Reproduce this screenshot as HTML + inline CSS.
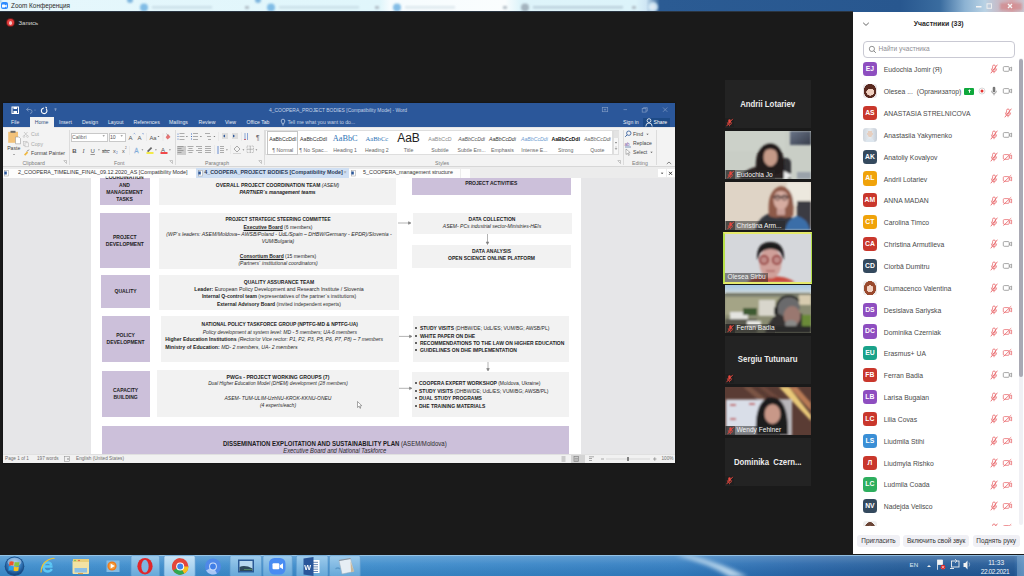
<!DOCTYPE html>
<html><head><meta charset="utf-8">
<style>
*{margin:0;padding:0;box-sizing:border-box}
html,body{width:1024px;height:576px;overflow:hidden;background:#1a1a1a;font-family:"Liberation Sans",sans-serif;position:relative}
.a{position:absolute}
.t{position:absolute;white-space:nowrap;line-height:1}
.tab{top:122.5px;transform:translateY(-50%);font-size:5.15px;color:#e9eef6}
.rb{font-size:5.15px;color:#444}
.rl{font-size:5.2px;color:#7a7a7a}
.sep{width:0.6px;background:#dcdcdc}
.sty{top:136.5px;transform:translateX(-50%)}
.stl{top:147.8px;transform:translateX(-50%);font-size:5.2px;color:#666}
.otb{top:173px;transform:translateY(-50%);font-size:5.4px;color:#333}
.pur{background:#ccc0da}
.gry{background:#f2f2f2}
.dl{transform:translate(-50%,-50%) scaleY(1.15);font-size:5px;font-weight:bold;color:#1c1c1c}
.dlL{transform:translateY(-50%) scaleY(1.15);font-size:5px;font-weight:bold;color:#1c1c1c}
.n{font-weight:normal;color:#2a2a2a}
.bu{position:absolute;width:2px;height:2px;border-radius:50%;background:#333}
.stb{top:458.8px;transform:translateY(-50%);font-size:4.7px;color:#6e6e6e}
.tile{position:absolute;left:725px;width:86px;height:48px;background:#232323;overflow:hidden}
.av{width:14.2px;height:14.2px;border-radius:3.3px;color:#fff;font-size:6.8px;font-weight:bold;text-align:center;line-height:14.6px}
.pn{transform:translateY(-50%);font-size:6.8px;color:#4a4a4a}
.pb{top:541px;transform:translate(-50%,-50%);font-size:6.43px;color:#333}
.tn{transform:translate(-50%,-50%) scaleY(1.08);font-size:7.8px;font-weight:bold;color:#ececec}
.vn{transform:translateY(-50%) scaleY(1.1);font-size:6.6px;color:#f4f4f4}
</style></head><body>
<!-- TITLE BAR -->
<div class="a" style="left:0;top:0;width:1024px;height:11.5px;background:linear-gradient(90deg,#e6f7fc 0px,#e0f6fb 380px,#f6fcfe 390px,#fafdfe 505px,#def4fa 520px,#dcf3fa 636px,#cfe6f4 646px,#2b5b93 660px,#28578f 900px,#3a6c9f 940px,#8db3d3 965px,#b9d2e4 985px,#c9b9c4 1000px,#d4a7ad 1012px,#c9c8d3 1024px)"></div>
<svg class="a" style="left:0;top:0" width="1024" height="12" viewBox="0 0 1024 12">
 <defs><filter id="tb"><feGaussianBlur stdDeviation="1"/></filter></defs>
 <g filter="url(#tb)" opacity="0.85">
 <rect x="-1" y="0" width="2" height="2" fill="#3b8fd0"/>
 <circle cx="144" cy="7.5" r="4" fill="#6fb2e2"/><rect x="152" y="6" width="60" height="2.5" fill="#c6dae4"/><rect x="245" y="6" width="4" height="3" fill="#aab6c0"/>
 <circle cx="271" cy="7.5" r="4" fill="#6fb2e2"/><rect x="279" y="6" width="80" height="2.5" fill="#c6dae4"/><rect x="375" y="6" width="4" height="3" fill="#aab6c0"/>
 <circle cx="130" cy="0" r="3" fill="#6aa8d8"/><circle cx="258" cy="0" r="3" fill="#6aa8d8"/>
 <circle cx="397" cy="7.5" r="4" fill="#6fb2e2"/><rect x="405" y="6" width="50" height="2.5" fill="#d8e4ea"/><rect x="503" y="6" width="4" height="3" fill="#aab6c0"/>
 <circle cx="525" cy="7.5" r="4" fill="#9aa8b4"/><rect x="533" y="6" width="90" height="2.5" fill="#b6cad6"/><rect x="632" y="6" width="4" height="3" fill="#aab6c0"/>
 <circle cx="653" cy="7" r="5" fill="#d6ecf8"/><circle cx="653" cy="7" r="2.5" fill="#f2f8fc"/>
 <rect x="1000" y="3" width="22" height="7" fill="#d56f6f" opacity="0.55"/>
 </g>
 <rect x="976" y="6" width="5.5" height="1.5" fill="#f4f4f4"/>
 <rect x="987" y="3.8" width="4.5" height="4.5" fill="none" stroke="#eee" stroke-width="1"/>
 <path d="M1008 4 l4 4 M1012 4 l-4 4" stroke="#f6f6f6" stroke-width="1.4"/>
</svg>
<div class="a" style="left:0.5px;top:2.2px;width:7px;height:7px;border-radius:2px;background:#2d8cff"></div>
<svg class="a" style="left:1.5px;top:3.7px" width="5" height="4" viewBox="0 0 5 4"><rect x="0" y="0.6" width="3" height="2.8" rx="0.5" fill="#fff"/><path d="M3 1.6 L4.8 0.6 V3.4 L3 2.4z" fill="#fff"/></svg>
<div class="t" style="left:11px;top:5.8px;transform:translateY(-50%);font-size:6.4px;color:#2a2a2a">Zoom Конференция</div>
<div class="a" style="left:0;top:11px;width:853px;height:0.8px;background:#2a3440"></div>
<!-- recording -->
<div class="a" style="left:5.8px;top:18px;width:9.4px;height:9.4px;border-radius:50%;background:#6a1a1a"></div>
<div class="a" style="left:6.7px;top:18.9px;width:7.6px;height:7.6px;border-radius:50%;background:#e23c3c"></div>
<div class="a" style="left:8.6px;top:20.6px;width:3.8px;height:4.2px;border-radius:50%;background:#f4c4c4"></div>
<div class="t" style="left:18.5px;top:22.9px;transform:translateY(-50%);font-size:6px;color:#d4d4d4">Запись</div>
<!-- WORD WINDOW -->
<div class="a" style="left:3px;top:103px;width:672px;height:360px;background:#e6e6e8"></div>
<div class="a" style="left:3px;top:103px;width:672px;height:24px;background:#2b579a"></div>
<!-- qat icons -->
<svg class="a" style="left:11px;top:106px" width="60" height="9" viewBox="0 0 60 9">
 <rect x="1" y="1" width="6.5" height="6.5" fill="none" stroke="#fff" stroke-width="1"/>
 <rect x="2.5" y="1" width="3.5" height="2" fill="#fff"/><rect x="2.5" y="5" width="3.5" height="2.5" fill="#fff"/>
 <path d="M15.5 3.5 L17.5 1.8 M15.5 3.5 L17.5 5.2 M15.5 3.5 H19 Q21 3.5 21 5.5 Q21 7.5 19 7.5" fill="none" stroke="#7f9bc4" stroke-width="0.9"/>
 <circle cx="24" cy="4" r="0.6" fill="#7f9bc4"/>
 <path d="M33 2 A2.8 2.8 0 1 0 35.3 3" fill="none" stroke="#fff" stroke-width="1.1"/><path d="M34 0.8 L36 1 L35.5 3.2Z" fill="#fff"/>
 <path d="M43.5 3.5 h2 l-1 1.2z" fill="#c9d6ea"/><rect x="43.5" y="2.5" width="2" height="0.4" fill="#c9d6ea"/>
</svg>
<div class="t" style="left:269px;top:110.8px;transform:translateY(-50%);font-size:4.94px;color:#c5d3e8">4_COOPERA_PROJECT BODIES [Compatibility Mode] - Word</div>
<!-- window controls -->
<svg class="a" style="left:600px;top:105px" width="75" height="10" viewBox="0 0 75 10">
 <g stroke="#7f9ac4" stroke-width="0.7" fill="none">
 <rect x="2.3" y="2.5" width="5.4" height="4.2"/><path d="M3.8 4.6 h2.4 M5 3.6 v2"/>
 <path d="M23.5 4.6 h3.5"/>
 <rect x="42.2" y="3.6" width="3.8" height="3.5"/><path d="M43.5 3.6 v-1 h3.8 v3.5 h-1.3"/>
 <path d="M63 2.5 l4.3 4.3 M67.3 2.5 l-4.3 4.3"/>
 </g>
</svg>
<!-- tabs -->
<div class="a" style="left:30px;top:117px;width:24px;height:11px;background:#f3f3f3"></div>
<div class="t tab" style="left:11px">File</div>
<div class="t tab" style="left:34.7px;color:#2f4d7e">Home</div>
<div class="t tab" style="left:59px">Insert</div>
<div class="t tab" style="left:82px">Design</div>
<div class="t tab" style="left:108px">Layout</div>
<div class="t tab" style="left:133.5px">References</div>
<div class="t tab" style="left:169px">Mailings</div>
<div class="t tab" style="left:198.5px">Review</div>
<div class="t tab" style="left:225px">View</div>
<div class="t tab" style="left:246.5px">Office Tab</div>
<svg class="a" style="left:280px;top:118px" width="6" height="8" viewBox="0 0 6 8"><path d="M1.2 3 A1.8 1.8 0 1 1 4.8 3 Q4.8 4.2 3.8 5 V6 H2.2 V5 Q1.2 4.2 1.2 3Z M2.3 7 H3.7" fill="none" stroke="#d6e0ef" stroke-width="0.7"/></svg>
<div class="t tab" style="left:287.5px;color:#c7d4e8">Tell me what you want to do...</div>
<div class="t tab" style="left:623px">Sign in</div>
<div class="a" style="left:643px;top:117.5px;width:27px;height:9.5px;background:#1d4a86"></div>
<svg class="a" style="left:645px;top:118px" width="8" height="9" viewBox="0 0 8 9"><circle cx="4" cy="2.6" r="1.9" fill="none" stroke="#fff" stroke-width="0.8"/><path d="M0.8 8.5 Q0.8 5 4 5 Q7.2 5 7.2 8.5" fill="none" stroke="#fff" stroke-width="0.8"/></svg>
<div class="t tab" style="left:653.5px;color:#fff">Share</div>
<!-- ribbon -->
<div class="a" style="left:3px;top:127.5px;width:672px;height:39px;background:#f3f3f3;border-bottom:1px solid #d7d7d7"></div>
<!-- clipboard group -->
<svg class="a" style="left:7px;top:130px" width="62" height="30" viewBox="0 0 62 30">
 <rect x="1.2" y="1.8" width="9.8" height="11" fill="#f2c27a"/>
 <rect x="3.5" y="0.8" width="5" height="2" fill="#6b6b6b"/>
 <path d="M8.5 7 h3.5 l1.5 1.5 v5.3 h-5z" fill="#fff" stroke="#8a8a8a" stroke-width="0.5"/>
 <path d="M6 24 l1 1 l1 -1z" fill="#666"/>
 <path d="M17 2 l3.5 4 M20.5 2 l-3.5 4" stroke="#b5b5b5" stroke-width="0.6"/><circle cx="17" cy="6.5" r="0.9" fill="none" stroke="#b5b5b5" stroke-width="0.5"/><circle cx="20.5" cy="6.5" r="0.9" fill="none" stroke="#b5b5b5" stroke-width="0.5"/>
 <rect x="16.5" y="11.5" width="3.5" height="4" fill="none" stroke="#bdbdbd" stroke-width="0.6"/><rect x="18" y="12.8" width="3.5" height="4" fill="#f3f3f3" stroke="#bdbdbd" stroke-width="0.6"/>
 <path d="M17 24.5 l3 -3 l1.2 1.2 l-3 3z" fill="#f0b73c"/><path d="M20 21.5 l1.8 -1.8" stroke="#555" stroke-width="0.8"/>
</svg>
<div class="t rb" style="left:7.2px;top:146.1px">Paste</div>
<div class="t rb" style="left:31px;top:131.8px;color:#a8a8a8">Cut</div>
<div class="t rb" style="left:31px;top:141.8px;color:#a8a8a8">Copy</div>
<div class="t rb" style="left:31px;top:151.3px">Format Painter</div>
<div class="t rl" style="left:22.6px;top:161.2px">Clipboard</div>
<svg class="a" style="left:63px;top:160px" width="5" height="5" viewBox="0 0 5 5"><path d="M0.5 0.5 h3 v3 M1 1 l2.5 2.5" fill="none" stroke="#999" stroke-width="0.5"/></svg>
<div class="a sep" style="left:69px;top:130px;height:35px"></div>
<!-- font group -->
<div class="a" style="left:70.8px;top:132.7px;width:36.8px;height:9.2px;background:#fff;border:0.5px solid #c9c9c9"></div>
<div class="a" style="left:109px;top:132.7px;width:17px;height:9.2px;background:#fff;border:0.5px solid #c9c9c9"></div>
<div class="t rb" style="left:72px;top:135.2px;color:#666">Calibri</div>
<div class="t rb" style="left:110px;top:135.2px;color:#555">10</div>
<svg class="a" style="left:70px;top:130px" width="106" height="26" viewBox="0 0 106 26">
 <path d="M32.5 5.5 l1.2 1 l1.2 -1z M50.5 5.5 l1.2 1 l1.2 -1z" fill="#555"/>
  <text x="58.5" y="9.8" font-size="6" fill="#555" font-family="Liberation Sans">A</text><path d="M63.5 4.2 l0.9 -0.9 l0.9 0.9" fill="none" stroke="#4472c4" stroke-width="0.5"/>
 <text x="67.5" y="9.8" font-size="6" fill="#555" font-family="Liberation Sans">A</text><path d="M72.2 3.3 l0.9 0.9 l0.9 -0.9" fill="none" stroke="#4472c4" stroke-width="0.5"/>
 <rect x="76.4" y="3" width="0.4" height="8" fill="#d8d8d8"/>
 <text x="79.5" y="9.5" font-size="5.8" fill="#555" font-family="Liberation Sans">Aa</text><path d="M87.5 6 l1 1 l1 -1z" fill="#555"/>
 <rect x="92.8" y="3" width="0.4" height="8" fill="#d8d8d8"/>
 <path d="M98 4 l2.5 3 l-3 2.5 l-1.8 -2.2z" fill="#e57373"/><path d="M96.5 3.5 l1.5 2" stroke="#777" stroke-width="0.5"/>
<text x="2.2" y="23" font-size="6" font-weight="bold" fill="#555" font-family="Liberation Sans">B</text>
 <text x="12.5" y="23" font-size="6" font-style="italic" fill="#555" font-family="Liberation Serif">I</text>
 <text x="20.5" y="23" font-size="6" fill="#555" font-family="Liberation Sans" text-decoration="underline">U</text><path d="M28 19.5 l0.9 0.9 l0.9 -0.9z" fill="#555"/>
 <text x="32" y="22.5" font-size="4.5" fill="#555" font-family="Liberation Sans">abc</text><path d="M32 20.5 h8" stroke="#555" stroke-width="0.5"/>
 <text x="43" y="22.5" font-size="5.5" fill="#555" font-family="Liberation Sans">x</text><text x="46" y="24" font-size="3" fill="#4472c4" font-family="Liberation Sans">2</text>
 <text x="52" y="22.5" font-size="5.5" fill="#555" font-family="Liberation Sans">x</text><text x="55" y="19" font-size="3" fill="#555" font-family="Liberation Sans">2</text>
 <rect x="59.5" y="16" width="0.4" height="9" fill="#d8d8d8"/>
 <text x="64.3" y="23" font-size="6.5" fill="#b9d5ee" stroke="#7aa6d6" stroke-width="0.3" font-family="Liberation Sans">A</text><path d="M71.5 19.5 l0.9 0.9 l0.9 -0.9z" fill="#555"/>
 <path d="M77 21 l4 -4 l1.2 1.2 l-4 4z" fill="#666"/><rect x="76.5" y="22.3" width="7" height="1.4" fill="#f3e600"/><path d="M85 19.5 l0.9 0.9 l0.9 -0.9z" fill="#555"/>
 <text x="91" y="22" font-size="6" fill="#555" font-family="Liberation Sans">A</text><rect x="90.5" y="22.3" width="7" height="1.4" fill="#e00"/><path d="M99 19.5 l0.9 0.9 l0.9 -0.9z" fill="#555"/>
</svg>
<div class="t rl" style="left:114px;top:161.2px">Font</div>
<svg class="a" style="left:169px;top:160px" width="5" height="5" viewBox="0 0 5 5"><path d="M0.5 0.5 h3 v3 M1 1 l2.5 2.5" fill="none" stroke="#999" stroke-width="0.5"/></svg>
<div class="a sep" style="left:175px;top:130px;height:35px"></div>
<!-- paragraph group -->
<div class="a" style="left:176.5px;top:145.5px;width:9px;height:9px;background:#cdcdcd"></div>
<svg class="a" style="left:175px;top:130px" width="90" height="26" viewBox="0 0 90 26">
 <g fill="#4472c4"><circle cx="3" cy="4" r="0.6"/><circle cx="3" cy="6.5" r="0.6"/><circle cx="3" cy="9" r="0.6"/></g>
 <g stroke="#7c7c7c" stroke-width="0.6"><path d="M4.5 3.5 h5 M4.5 6.5 h5 M4.5 9.5 h5"/></g><path d="M11 6 l0.9 0.9 l0.9 -0.9z" fill="#555"/>
 <g fill="#4472c4"><rect x="16" y="3.5" width="1" height="1"/><rect x="16" y="6" width="1" height="1"/><rect x="16" y="8.5" width="1" height="1"/></g>
 <g stroke="#7c7c7c" stroke-width="0.6"><path d="M18 3.5 h5 M18 6.5 h5 M18 9.5 h5"/></g><path d="M25 6 l0.9 0.9 l0.9 -0.9z" fill="#555"/>
 <g stroke="#7c7c7c" stroke-width="0.6"><path d="M30 3.5 h5 M32 6.5 h4 M33 9.5 h3"/></g><path d="M38.5 6 l0.9 0.9 l0.9 -0.9z" fill="#555"/>
 <rect x="43.5" y="2" width="0.4" height="9" fill="#d8d8d8"/>
 <rect x="47" y="3" width="6" height="6" fill="#ddd"/><path d="M48 6 l2 -1.5 v3z" fill="#2b579a"/>
 <rect x="57" y="3" width="6" height="6" fill="#ddd"/><path d="M60 6 l-2 -1.5 v3z" fill="#2b579a"/>
 <rect x="66.5" y="2" width="0.4" height="9" fill="#d8d8d8"/>
 <path d="M70 3 v7 M72.5 3 v7" stroke="#4472c4" stroke-width="0.6"/><path d="M70 10 l-1 -1 M70 10 l1 -1" stroke="#c00" stroke-width="0.5"/>
 <text x="81" y="9.5" font-size="6.5" fill="#666" font-family="Liberation Sans">¶</text>
 <g stroke="#7c7c7c" stroke-width="0.6"><path d="M2.5 16.5 h6 M2.5 18.5 h4 M2.5 20.5 h6 M2.5 22.5 h4"/></g>
 <g stroke="#7c7c7c" stroke-width="0.6"><path d="M12.5 16.5 h6 M13.5 18.5 h4 M12.5 20.5 h6 M13.5 22.5 h4"/></g>
 <g stroke="#7c7c7c" stroke-width="0.6"><path d="M21 16.5 h6 M23 18.5 h4 M21 20.5 h6 M23 22.5 h4"/></g>
 <g stroke="#7c7c7c" stroke-width="0.6"><path d="M30 16.5 h6 M30 18.5 h6 M30 20.5 h6 M30 22.5 h6"/></g>
 <rect x="39.5" y="15" width="0.4" height="9" fill="#d8d8d8"/>
 <path d="M43 16 v8" stroke="#4472c4" stroke-width="0.8"/><g stroke="#7c7c7c" stroke-width="0.6"><path d="M45 16.5 h4 M45 18.5 h4 M45 20.5 h4 M45 22.5 h4"/></g><path d="M51 19.5 l0.9 0.9 l0.9 -0.9z" fill="#555"/>
 <rect x="55.5" y="15" width="0.4" height="9" fill="#d8d8d8"/>
 <path d="M59 19 l3 -3 l3 3 l-3 3z" fill="none" stroke="#777" stroke-width="0.6"/><rect x="58" y="23" width="8" height="0.8" fill="#ccc"/><path d="M67.5 19.5 l0.9 0.9 l0.9 -0.9z" fill="#555"/>
 <rect x="72" y="16" width="6.5" height="6.5" fill="none" stroke="#888" stroke-width="0.5" stroke-dasharray="1 0.7"/><path d="M75.25 16 v6.5 M72 19.25 h6.5" stroke="#888" stroke-width="0.5"/><path d="M80.5 19.5 l0.9 0.9 l0.9 -0.9z" fill="#555"/>
</svg>
<div class="t rl" style="left:205px;top:161.2px">Paragraph</div>
<svg class="a" style="left:258px;top:160px" width="5" height="5" viewBox="0 0 5 5"><path d="M0.5 0.5 h3 v3 M1 1 l2.5 2.5" fill="none" stroke="#999" stroke-width="0.5"/></svg>
<div class="a sep" style="left:264px;top:130px;height:35px"></div>
<!-- styles gallery -->
<div class="a" style="left:265px;top:130.3px;width:348px;height:24.7px;background:#fff;border:0.5px solid #dedede"></div>
<div class="a" style="left:266.5px;top:131px;width:31.5px;height:23.5px;border:1px solid #c6c6c6"></div>
<div class="a" style="left:613px;top:130.3px;width:6px;height:24.7px;background:#f7f7f7;border:0.5px solid #dedede"></div>
<div class="a" style="left:613.5px;top:131px;width:5px;height:7px;background:#e3e3e3"></div>
<svg class="a" style="left:613px;top:138px" width="6" height="17" viewBox="0 0 6 17"><path d="M2 5 l1 -1 l1 1z M2 10.5 l1 1 l1 -1z M2 9 h2" fill="#777" stroke="#777" stroke-width="0.3"/></svg>
<div class="t sty" style="left:282.8px;color:#333;font-size:5.2px">AaBbCcDdI</div>
<div class="t sty" style="left:313.6px;color:#333;font-size:5.2px">AaBbCcDdI</div>
<div class="t sty" style="left:345.2px;top:134.5px;color:#2e74b5;font-size:8.3px;font-family:'Liberation Serif',serif">AaBbC</div>
<div class="t sty" style="left:376.9px;top:135.5px;color:#2e74b5;font-size:6.6px;font-family:'Liberation Serif',serif">AaBbCc</div>
<div class="t sty" style="left:408.5px;top:131.5px;color:#222;font-size:12px">AaB</div>
<div class="t sty" style="left:440px;color:#8a8a8a;font-size:5.3px">AaBbCcD</div>
<div class="t sty" style="left:471.6px;color:#555;font-size:5.2px;font-style:italic">AaBbCcDdi</div>
<div class="t sty" style="left:502.4px;color:#333;font-size:5.2px;font-style:italic">AaBbCcDdi</div>
<div class="t sty" style="left:534.4px;color:#6c9ad0;font-size:5.2px;font-style:italic">AaBbCcDdi</div>
<div class="t sty" style="left:565.7px;color:#111;font-size:5.2px;font-weight:bold">AaBbCcDdI</div>
<div class="t sty" style="left:597.3px;color:#666;font-size:5.2px;font-style:italic">AaBbCcDdi</div>
<div class="t stl" style="left:282.8px">¶ Normal</div>
<div class="t stl" style="left:313.6px">¶ No Spac...</div>
<div class="t stl" style="left:345.2px">Heading 1</div>
<div class="t stl" style="left:376.9px">Heading 2</div>
<div class="t stl" style="left:408.5px">Title</div>
<div class="t stl" style="left:440px">Subtitle</div>
<div class="t stl" style="left:471.6px">Subtle Em...</div>
<div class="t stl" style="left:502.4px">Emphasis</div>
<div class="t stl" style="left:534.4px">Intense E...</div>
<div class="t stl" style="left:565.7px">Strong</div>
<div class="t stl" style="left:597.3px">Quote</div>
<div class="t rl" style="left:435px;top:161.2px">Styles</div>
<svg class="a" style="left:617px;top:160px" width="5" height="5" viewBox="0 0 5 5"><path d="M0.5 0.5 h3 v3 M1 1 l2.5 2.5" fill="none" stroke="#999" stroke-width="0.5"/></svg>
<div class="a sep" style="left:622.7px;top:130px;height:35px"></div>
<!-- editing -->
<svg class="a" style="left:624px;top:130px" width="12" height="26" viewBox="0 0 12 26">
 <circle cx="4.8" cy="3.2" r="2.2" fill="none" stroke="#2b579a" stroke-width="0.8"/><path d="M3.2 4.8 l-2 2" stroke="#2b579a" stroke-width="0.9"/>
 <text x="0.5" y="16" font-size="4.5" fill="#7b5aa6" font-family="Liberation Sans">ab</text><path d="M1 17 h6" stroke="#2b579a" stroke-width="0.6"/>
 <path d="M2 19 v5.5 l1.4 -1.3 l1.2 2.3 l0.8 -0.4 l-1.1 -2.2 l1.9 -0.2z" fill="#fff" stroke="#777" stroke-width="0.5"/>
</svg>
<div class="t rb" style="left:633px;top:131.8px">Find</div>
<svg class="a" style="left:646px;top:132.5px" width="3" height="3" viewBox="0 0 3 3"><path d="M0.3 0.8 l1.2 1.2 l1.2 -1.2z" fill="#555"/></svg>
<div class="t rb" style="left:633px;top:141.3px">Replace</div>
<div class="t rb" style="left:633px;top:150.3px">Select</div>
<svg class="a" style="left:650px;top:151px" width="3" height="3" viewBox="0 0 3 3"><path d="M0.3 0.8 l1.2 1.2 l1.2 -1.2z" fill="#555"/></svg>
<div class="t rl" style="left:632px;top:161.2px">Editing</div>
<div class="a sep" style="left:655.5px;top:130px;height:35px"></div>
<svg class="a" style="left:666px;top:161px" width="6" height="4" viewBox="0 0 6 4"><path d="M0.8 3 l2.2 -2 l2.2 2" fill="none" stroke="#555" stroke-width="0.7"/></svg>
<!-- office tab bar -->
<div class="a" style="left:3px;top:167px;width:672px;height:10.5px;background:#ececec"></div>
<div class="a" style="left:3px;top:168.5px;width:192.5px;height:9px;background:#fdfdfd"></div>
<div class="a" style="left:195.8px;top:168.4px;width:153px;height:9.4px;background:#cfdff3"></div>
<div class="a" style="left:349px;top:168.6px;width:111px;height:9px;background:#fdfdfd"></div>
<div class="a" style="left:461.4px;top:168.6px;width:8.6px;height:9px;background:#fdfdfd"></div>
<svg class="a" style="left:4px;top:169.5px" width="6" height="7" viewBox="0 0 6 7"><rect x="0.5" y="0.5" width="4" height="5.5" fill="#fff" stroke="#999" stroke-width="0.5"/><rect x="0.3" y="1.5" width="2.5" height="3" fill="#2b579a"/></svg>
<svg class="a" style="left:197.5px;top:169.5px" width="6" height="7" viewBox="0 0 6 7"><rect x="0.5" y="0.5" width="4" height="5.5" fill="#fff" stroke="#999" stroke-width="0.5"/><rect x="0.3" y="1.5" width="2.5" height="3" fill="#2b579a"/></svg>
<svg class="a" style="left:351px;top:169.5px" width="6" height="7" viewBox="0 0 6 7"><rect x="0.5" y="0.5" width="4" height="5.5" fill="#fff" stroke="#999" stroke-width="0.5"/><rect x="0.3" y="1.5" width="2.5" height="3" fill="#2b579a"/></svg>
<div class="t otb" style="left:18px">2_COOPERA_TIMELINE_FINAL_09.12.2020_AS [Compatibility Mode]</div>
<div class="t otb" style="left:204.2px;font-weight:bold;color:#2a3a55">4_COOPERA_PROJECT BODIES [Compatibility Mode]</div>
<div class="t otb" style="left:343.5px;color:#999">×</div>
<div class="t otb" style="left:363px">5_COOPERA_management structure</div>
<div class="a" style="left:658px;top:168.5px;width:8px;height:8.5px;background:#fff"></div>
<div class="a" style="left:667px;top:168.5px;width:8px;height:8.5px;background:#fff"></div>
<svg class="a" style="left:658px;top:168.5px" width="17" height="9" viewBox="0 0 17 9"><path d="M2.8 3.8 h2.6 l-1.3 1.3z" fill="#222"/><path d="M11 2.8 l3 3 M14 2.8 l-3 3" stroke="#222" stroke-width="0.9"/></svg>
<!-- document -->
<div class="a" style="left:91px;top:177.5px;width:490px;height:276.5px;background:#fff"></div>
<div class="a pur" style="left:100px;top:177.5px;width:49.5px;height:27.3px"></div>
<div class="a gry" style="left:159.4px;top:177.5px;width:236.8px;height:27.9px"></div>
<div class="a pur" style="left:412.2px;top:177.5px;width:158.8px;height:17px"></div>
<div class="a pur" style="left:100px;top:213.2px;width:49.5px;height:54.7px"></div>
<div class="a gry" style="left:159.4px;top:213.2px;width:237.2px;height:55.5px"></div>
<div class="a gry" style="left:412.8px;top:213px;width:159px;height:20.6px"></div>
<div class="a gry" style="left:412px;top:245px;width:159px;height:22.8px"></div>
<div class="a pur" style="left:101.3px;top:275px;width:48.6px;height:32.5px"></div>
<div class="a gry" style="left:159.4px;top:274.5px;width:239.3px;height:35.8px"></div>
<div class="a pur" style="left:101.6px;top:315.9px;width:48.4px;height:46.6px"></div>
<div class="a gry" style="left:161.1px;top:316.1px;width:237.6px;height:46.2px"></div>
<div class="a gry" style="left:413px;top:316.1px;width:156px;height:45.9px"></div>
<div class="a pur" style="left:101.6px;top:370.8px;width:48.4px;height:45.9px"></div>
<div class="a gry" style="left:157.4px;top:370px;width:241.3px;height:46.7px"></div>
<div class="a gry" style="left:412.3px;top:371.5px;width:156.7px;height:45.1px"></div>
<div class="a pur" style="left:101.6px;top:425.6px;width:467.4px;height:28.4px"></div>
<!-- arrows -->
<svg class="a" style="left:395px;top:210px" width="100" height="200" viewBox="0 0 100 200">
 <g stroke="#7f7f7f" stroke-width="0.6" fill="#7f7f7f">
 <path d="M3 13 h12"/><path d="M16 13 l-2.5 -1.3 v2.6z"/>
 <path d="M92.5 24 v9.5"/><path d="M92.5 34.5 l-1.3 -2.5 h2.6z"/>
 <path d="M4 126.4 h12"/><path d="M17 126.4 l-2.5 -1.3 v2.6z"/>
 <path d="M93 152 v8"/><path d="M93 161 l-1.3 -2.5 h2.6z"/>
 <path d="M4 178.3 h12"/><path d="M17 178.3 l-2.5 -1.3 v2.6z"/>
 </g>
</svg>
<!-- purple labels -->
<div class="t dl" style="left:124.5px;top:177.5px;height:2.5px;overflow:hidden"><span style="position:relative;top:-2.3px">COORDINATION</span></div>
<div class="t dl" style="left:124.5px;top:184.5px">AND</div>
<div class="t dl" style="left:124.5px;top:191.8px">MANAGEMENT</div>
<div class="t dl" style="left:124.5px;top:198.9px">TASKS</div>
<div class="t dl" style="left:124.8px;top:237px">PROJECT</div>
<div class="t dl" style="left:124.8px;top:244px">DEVELOPMENT</div>
<div class="t dl" style="left:125.6px;top:291px">QUALITY</div>
<div class="t dl" style="left:125.6px;top:335.3px">POLICY</div>
<div class="t dl" style="left:125.6px;top:342.3px">DEVELOPMENT</div>
<div class="t dl" style="left:125.6px;top:389.9px">CAPACITY</div>
<div class="t dl" style="left:125.6px;top:396.8px">BUILDING</div>
<!-- box texts -->
<div class="t dl" style="left:277.5px;top:184.8px">OVERALL PROJECT COORDINATION TEAM <i class="n">(ASEM)</i></div>
<div class="t dl" style="left:277.5px;top:191.9px"><i>PARTNER`s management teams</i></div>
<div class="t dl" style="left:278px;top:219.7px;font-size:4.72px">PROJECT STRATEGIC STEERING COMMITTEE</div>
<div class="t dl" style="left:278px;top:227px"><u>Executive Board</u> <span class="n">(6 members)</span></div>
<div class="t dl n" style="left:279px;top:234px;font-size:5.17px"><i>(WP`s leaders: ASEM/Moldova– AWSB/Poland - UdL/Spain – DHBW/Germany - EPDR)/Slovenia -</i></div>
<div class="t dl n" style="left:278px;top:241px"><i>VUM/Bulgaria)</i></div>
<div class="t dl" style="left:278px;top:255.5px"><u>Consortium Board</u> <span class="n">(15 members)</span></div>
<div class="t dl n" style="left:278px;top:262.6px"><i>(Partners` institutional coordinators)</i></div>
<div class="t dl" style="left:279px;top:281.7px">QUALITY ASSURANCE TEAM</div>
<div class="t dl" style="left:279px;top:288.8px;font-size:5.25px">Leader: <span class="n">European Policy Development and Research Institute / Slovenia</span></div>
<div class="t dl" style="left:279px;top:296.2px">Internal Q-control team <span class="n">(representatives of the partner`s institutions)</span></div>
<div class="t dl" style="left:279px;top:303.5px">External Advisory Board <span class="n">(invited independent experts)</span></div>
<div class="t dl" style="left:279.8px;top:324.9px;font-size:4.89px">NATIONAL POLICY TASKFORCE GROUP (NPTFG-MD &amp; NPTFG-UA)</div>
<div class="t dl n" style="left:279.8px;top:332px"><i>Policy development at system level: MD - 5 members; UA-6 members</i></div>
<div class="t dlL" style="left:165.3px;top:339.4px;font-size:5.12px">Higher Education Institutions <i class="n">(Rector/or Vice rector: P1, P2, P3, P5, P6, P7, P8) – 7 members</i></div>
<div class="t dlL" style="left:165.3px;top:346.5px;font-size:5.2px">Ministry of Education: <i class="n">MD- 2 members, UA- 2 members</i></div>
<div class="t dl" style="left:278px;top:376.5px;font-size:5.18px">PWGs - PROJECT WORKING GROUPS (7)</div>
<div class="t dl n" style="left:278px;top:383.7px;font-size:4.76px"><i>Dual Higher Education Model (DHEM) development (28 members)</i></div>
<div class="t dl n" style="left:278px;top:397.5px"><i>ASEM- TUM-ULIM-UzhNU-KROK-KKNU-ONEU</i></div>
<div class="t dl n" style="left:278px;top:404.6px"><i>(4 experts/each)</i></div>
<div class="t dl" style="left:491.3px;top:182.8px">PROJECT ACTIVITIES</div>
<div class="t dl" style="left:492px;top:218.5px">DATA COLLECTION</div>
<div class="t dl n" style="left:492px;top:226px"><i>ASEM- PCs industrial sector-Ministries-HEIs</i></div>
<div class="t dl" style="left:491.5px;top:250.5px">DATA ANALYSIS</div>
<div class="t dl" style="left:491.5px;top:258px">OPEN SCIENCE ONLINE PLATFORM</div>
<div class="bu" style="left:415.3px;top:327.1px"></div>
<div class="t dlL" style="left:419.9px;top:328.1px">STUDY VISITS <span class="n">(DHBW/DE; UdL/ES; VUM/BG; AWSB/PL)</span></div>
<div class="bu" style="left:415.3px;top:334.5px"></div>
<div class="t dlL" style="left:419.9px;top:335.5px">WHITE PAPER ON DHE</div>
<div class="bu" style="left:415.3px;top:341.9px"></div>
<div class="t dlL" style="left:419.9px;top:342.9px">RECOMMENDATIONS TO THE LAW ON HIGHER EDUCATION</div>
<div class="bu" style="left:415.3px;top:349.3px"></div>
<div class="t dlL" style="left:419.9px;top:350.3px">GUIDELINES ON DHE IMPLEMENTATION</div>
<div class="bu" style="left:414.8px;top:382.2px"></div>
<div class="t dlL" style="left:419.0px;top:383.2px">COOPERA EXPERT WORKSHOP <span class="n">(Moldova, Ukraine)</span></div>
<div class="bu" style="left:414.8px;top:389.8px"></div>
<div class="t dlL" style="left:419.0px;top:390.8px">STUDY VISITS <span class="n">(DHBW/DE; UdL/ES; VUM/BG; AWSB/PL)</span></div>
<div class="bu" style="left:414.8px;top:397.2px"></div>
<div class="t dlL" style="left:419.0px;top:398.2px">DUAL STUDY PROGRAMS</div>
<div class="bu" style="left:414.8px;top:404.5px"></div>
<div class="t dlL" style="left:419.0px;top:405.5px">DHE TRAINING MATERIALS</div>
<div class="t dl" style="left:334.8px;top:443.6px;font-size:6.04px">DISSEMINATION EXPLOITATION AND SUSTAINABILITY PLAN <span class="n">(ASEM/Moldova)</span></div>
<div class="t dl n" style="left:334.8px;top:451.7px;font-size:5.8px"><i>Executive Board and National Taskforce</i></div>
<!-- cursor -->
<svg class="a" style="left:357px;top:401px" width="6" height="8" viewBox="0 0 6 8"><path d="M0.5 0.5 v6 l1.5 -1.3 l1 2.2 l0.8 -0.4 l-1 -2.1 l2 -0.2z" fill="#fff" stroke="#555" stroke-width="0.5"/></svg>
<!-- status bar -->
<div class="a" style="left:3px;top:454px;width:672px;height:9.4px;background:#f1f1f1;border-top:0.5px solid #e0e0e0"></div>
<div class="t stb" style="left:5px">Page 1 of 1</div>
<div class="t stb" style="left:37px">197 words</div>
<svg class="a" style="left:64px;top:455.5px" width="7" height="6" viewBox="0 0 7 6"><rect x="0.5" y="0.5" width="5" height="5" fill="none" stroke="#888" stroke-width="0.5"/><path d="M3 2 l2 2 M5 2 l-2 2" stroke="#888" stroke-width="0.5"/></svg>
<div class="t stb" style="left:76px">English (United States)</div>
<div class="a" style="left:571.2px;top:454.5px;width:14.3px;height:8.9px;background:#d4d4d4"></div>
<svg class="a" style="left:560px;top:454px" width="115" height="10" viewBox="0 0 115 10">
 <g stroke="#777" stroke-width="0.6" fill="none"><path d="M1.5 3 h4 M1.5 5 h4 M1.5 7 h4"/><rect x="14" y="2.5" width="4.5" height="5"/><path d="M14.5 4.3 h3.5 M14.5 6 h3.5"/><path d="M29 2.8 h5 M29 4.5 h3 M29 6.5 h3"/><path d="M41 5 h3"/><path d="M93 5 h3.5 M94.75 3.25 v3.5"/></g>
 <path d="M46 5 h44" stroke="#c6c6c6" stroke-width="0.6"/><rect x="67.3" y="3" width="1.4" height="4" fill="#555"/>
</svg>
<div class="t stb" style="left:661.5px">100%</div>
<div class="a" style="left:3px;top:103px;width:672px;height:360.4px;box-shadow:0 0 1.5px #0c0c0c"></div>
<!-- TILES -->
<div class="tile" style="top:80px;height:48px"></div>
<div class="t tn" style="left:767.7px;top:104.9px">Andrii Lotariev</div>
<svg class="a" style="left:725.1px;top:118px" width="9" height="9" viewBox="0 0 9 9"><rect width="9" height="9" fill="rgba(30,30,30,0.55)"/><rect x="3.3" y="1.2" width="2.4" height="4.2" rx="1.2" fill="#e5483f"/><path d="M2.3 4.3 Q2.3 6.8 4.5 6.8 Q6.7 6.8 6.7 4.3 M4.5 6.8 V8.2" fill="none" stroke="#e5483f" stroke-width="0.7"/><path d="M1.5 8.2 L7.8 0.8" stroke="#e5483f" stroke-width="0.9"/></svg>
<div class="tile" style="top:131px;height:48px"><svg width="86" height="48" viewBox="0 0 86 48"><defs><filter id="b1"><feGaussianBlur stdDeviation="0.8"/></filter>
<linearGradient id="fr1" x1="0" y1="0" x2="1" y2="1"><stop offset="0" stop-color="#6a7488"/><stop offset="1" stop-color="#363c4a"/></linearGradient></defs>
<rect width="86" height="48" fill="#c9cec6"/><g filter="url(#b1)">
<rect x="0" y="0" width="60" height="20" fill="#cfd3cb" opacity="0.6"/>
<rect x="65" y="0" width="21" height="14" fill="url(#fr1)"/>
<rect x="48" y="27" width="18" height="21" rx="5" fill="#303036"/>
<path d="M14 48 Q20 36 40 34 Q60 36 66 48z" fill="#2a2424"/>
<path d="M31 40 Q29 14 45 12 Q60 13 59 38 Q55 44 45 44 Q35 44 31 40z" fill="#241a1a"/>
<ellipse cx="45.5" cy="26" rx="7" ry="9.2" fill="#c49a88"/>
<path d="M37 22 Q38 15 45.5 15 Q53 15 54 22 Q49 18 45.5 18 Q41 18 37 22z" fill="#241a1a"/>
<rect x="72" y="41" width="14" height="7" fill="#9aa2aa"/>
<path d="M59 40 L67 44 L62 48 L59 48z" fill="#eeeeee"/>
</g></svg></div>
<div class="a" style="left:725px;top:170.0px;width:50px;height:9px;background:rgba(40,40,40,0.5)"></div>
<svg class="a" style="left:725.5px;top:170.2px" width="9" height="9" viewBox="0 0 9 9"><rect width="9" height="9" fill="rgba(30,30,30,0.55)"/><rect x="3.3" y="1.2" width="2.4" height="4.2" rx="1.2" fill="#e5483f"/><path d="M2.3 4.3 Q2.3 6.8 4.5 6.8 Q6.7 6.8 6.7 4.3 M4.5 6.8 V8.2" fill="none" stroke="#e5483f" stroke-width="0.7"/><path d="M1.5 8.2 L7.8 0.8" stroke="#e5483f" stroke-width="0.9"/></svg>
<div class="t vn" style="left:736.5px;top:174.6px">Eudochia Jo</div>
<div class="tile" style="top:182px;height:48px"><svg width="86" height="48" viewBox="0 0 86 48"><defs><filter id="b2"><feGaussianBlur stdDeviation="0.8"/></filter></defs>
<rect width="86" height="48" fill="#dfd4c6"/><g filter="url(#b2)">
<rect x="62" y="0" width="24" height="23" fill="#ece8de"/>
<rect x="72" y="19" width="14" height="29" fill="#3a3a42"/>
<path d="M30 48 Q34 32 50 30 Q68 30 76 48z" fill="#30343c"/>
<path d="M60 48 Q63 36 72 34 Q82 36 85 48z" fill="#3a6ea8"/>
<path d="M44 34 Q41 8 56 4 Q71 6 68 34 Q62 37 56 35 Q50 37 44 34z" fill="#8e5a48"/>
<ellipse cx="56" cy="18" rx="7.5" ry="10" fill="#d6aca0"/>
<path d="M47.5 15 h17" stroke="#3a2a2a" stroke-width="1.1"/>
<circle cx="52.5" cy="15.5" r="2.6" fill="none" stroke="#3a2a2a" stroke-width="0.9"/><circle cx="59.5" cy="15.5" r="2.6" fill="none" stroke="#3a2a2a" stroke-width="0.9"/>
<path d="M47 12 Q49 5 56 5 Q63 5 65 12 Q60 9 56 9 Q51 9 47 12z" fill="#8e5a48"/>
<rect x="52" y="27" width="8" height="6" fill="#caa098"/>
</g></svg></div>
<div class="a" style="left:725px;top:221.0px;width:60px;height:9px;background:rgba(40,40,40,0.5)"></div>
<svg class="a" style="left:725.5px;top:221.2px" width="9" height="9" viewBox="0 0 9 9"><rect width="9" height="9" fill="rgba(30,30,30,0.55)"/><rect x="3.3" y="1.2" width="2.4" height="4.2" rx="1.2" fill="#e5483f"/><path d="M2.3 4.3 Q2.3 6.8 4.5 6.8 Q6.7 6.8 6.7 4.3 M4.5 6.8 V8.2" fill="none" stroke="#e5483f" stroke-width="0.7"/><path d="M1.5 8.2 L7.8 0.8" stroke="#e5483f" stroke-width="0.9"/></svg>
<div class="t vn" style="left:736.5px;top:225.6px">Christina Arm...</div>
<div class="a" style="left:722.5px;top:231.5px;width:89.6px;height:52.4px;border:2px solid #e6ea6c;border-left-color:#b6e04a;border-right-color:#b6e04a"></div>
<div class="tile" style="top:233.5px;height:48.4px"><svg width="86" height="48.4" viewBox="0 0 86 48.4"><defs><filter id="b3"><feGaussianBlur stdDeviation="0.8"/></filter></defs>
<rect width="86" height="48.4" fill="#d5d7db"/><g filter="url(#b3)">
<path d="M22 48.4 Q28 42 45 42 Q62 42 70 48.4z" fill="#c84a3c"/>
<path d="M32 26 Q31 8 45.5 8 Q60 8 59 26 L57 22 Q55 14 45.5 14 Q36 14 34 22z" fill="#1e1a1c"/>
<ellipse cx="45.4" cy="29" rx="11" ry="15.5" fill="#d0a09a"/>
<path d="M33.5 20 Q35 11 45.5 11 Q56 11 57.5 20 Q52 15 45.5 15 Q39 15 33.5 20z" fill="#1e1a1c"/>
<circle cx="39" cy="26" r="4.2" fill="#c08a86" stroke="#8a2424" stroke-width="1.5"/>
<circle cx="51.8" cy="26" r="4.2" fill="#c08a86" stroke="#8a2424" stroke-width="1.5"/>
<path d="M41 37 h9" stroke="#a05050" stroke-width="1.2"/>
</g></svg></div>
<div class="a" style="left:725px;top:272.5px;width:43px;height:9px;background:rgba(40,40,40,0.5)"></div>
<div class="t vn" style="left:727.5px;top:277.1px">Olesea Sirbu</div>
<div class="tile" style="top:284.5px;height:48px"><svg width="86" height="48" viewBox="0 0 86 48"><defs><filter id="b4"><feGaussianBlur stdDeviation="0.8"/></filter>
<linearGradient id="sk" x1="0" y1="0" x2="0" y2="1"><stop offset="0" stop-color="#a6c8e6"/><stop offset="1" stop-color="#d2dada"/></linearGradient></defs>
<rect width="86" height="48" fill="#8a8c72"/><rect width="86" height="9" fill="url(#sk)"/><g filter="url(#b4)">
<rect x="0" y="8" width="86" height="3.5" fill="#7a7e70"/>
<rect x="0" y="12" width="58" height="18" fill="#a4a486"/>
<rect x="34" y="15" width="16" height="16" fill="#d8d6cc"/>
<rect x="5" y="27" width="18" height="8" fill="#e4e4e0"/>
<rect x="18" y="23" width="14" height="7" fill="#3e5a30"/>
<rect x="0" y="34" width="32" height="14" fill="#5a5a50"/>
<rect x="22" y="36" width="14" height="6" fill="#e8e8e4"/>
<rect x="74" y="10" width="12" height="10" fill="#d8ccb0"/>
<path d="M40 48 Q44 34 54 28 Q68 20 80 32 L86 48z" fill="#343232"/>
<ellipse cx="63" cy="22" rx="12" ry="10" fill="#6a6a6c"/>
<path d="M51 26 Q52 12 63 11 Q70 11 74 16" fill="none" stroke="#202020" stroke-width="2"/>
<rect x="49" y="22" width="4" height="8" rx="1.5" fill="#222"/>
<ellipse cx="67" cy="31" rx="8.5" ry="10" fill="#9a7870"/>
<ellipse cx="66" cy="39" rx="6" ry="4" fill="#8a8a88"/>
<rect x="77" y="30" width="9" height="12" fill="#6a8a38"/>
<rect x="50" y="41" width="36" height="7" fill="#2c2c2c"/>
</g></svg></div>
<div class="a" style="left:725px;top:323.5px;width:50px;height:9px;background:rgba(40,40,40,0.5)"></div>
<svg class="a" style="left:725.5px;top:323.7px" width="9" height="9" viewBox="0 0 9 9"><rect width="9" height="9" fill="rgba(30,30,30,0.55)"/><rect x="3.3" y="1.2" width="2.4" height="4.2" rx="1.2" fill="#e5483f"/><path d="M2.3 4.3 Q2.3 6.8 4.5 6.8 Q6.7 6.8 6.7 4.3 M4.5 6.8 V8.2" fill="none" stroke="#e5483f" stroke-width="0.7"/><path d="M1.5 8.2 L7.8 0.8" stroke="#e5483f" stroke-width="0.9"/></svg>
<div class="t vn" style="left:736.5px;top:328.1px">Ferran Badia</div>
<div class="tile" style="top:335.5px;height:48px"></div>
<div class="t tn" style="left:767.7px;top:360.4px">Sergiu Tutunaru</div>
<svg class="a" style="left:725.1px;top:373.5px" width="9" height="9" viewBox="0 0 9 9"><rect width="9" height="9" fill="rgba(30,30,30,0.55)"/><rect x="3.3" y="1.2" width="2.4" height="4.2" rx="1.2" fill="#e5483f"/><path d="M2.3 4.3 Q2.3 6.8 4.5 6.8 Q6.7 6.8 6.7 4.3 M4.5 6.8 V8.2" fill="none" stroke="#e5483f" stroke-width="0.7"/><path d="M1.5 8.2 L7.8 0.8" stroke="#e5483f" stroke-width="0.9"/></svg>
<div class="tile" style="top:386.8px;height:48px"><svg width="86" height="48" viewBox="0 0 86 48"><defs><filter id="b6"><feGaussianBlur stdDeviation="0.8"/></filter></defs>
<rect width="86" height="48" fill="#5a3c34"/><g filter="url(#b6)">
<path d="M54 0 L64 0 L86 28 L86 34z" fill="#e8c878"/>
<path d="M64 0 L72 0 L86 16 L86 24z" fill="#b87a54"/>
<path d="M18 0 L26 0 L48 18 L42 20z" fill="#7a5444"/>
<path d="M34 0 L40 0 L56 12 L52 14z" fill="#6e4a3c"/>
<rect x="1" y="12.5" width="66" height="36" fill="#d9dee8"/>
<rect x="52" y="12.5" width="15" height="36" fill="#b8b6ba"/>
<rect x="5" y="17" width="6" height="2" fill="#c05858"/><rect x="24" y="16" width="6" height="2" fill="#c05858"/><rect x="5" y="31" width="6" height="2" fill="#c05858"/>
<path d="M31 48 Q29 11 47 10 Q64 11 63 48z" fill="#1c1a1e"/>
<ellipse cx="47.5" cy="27" rx="8" ry="10" fill="#c89888"/>
<path d="M38 21 Q41 13 48 13 Q56 14 57 21 Q52 17 47 17 Q42 18 38 21z" fill="#1c1a1e"/>
</g></svg></div>
<div class="a" style="left:725px;top:425.8px;width:55px;height:9px;background:rgba(40,40,40,0.5)"></div>
<svg class="a" style="left:725.5px;top:426.0px" width="9" height="9" viewBox="0 0 9 9"><rect width="9" height="9" fill="rgba(30,30,30,0.55)"/><rect x="3.3" y="1.2" width="2.4" height="4.2" rx="1.2" fill="#e5483f"/><path d="M2.3 4.3 Q2.3 6.8 4.5 6.8 Q6.7 6.8 6.7 4.3 M4.5 6.8 V8.2" fill="none" stroke="#e5483f" stroke-width="0.7"/><path d="M1.5 8.2 L7.8 0.8" stroke="#e5483f" stroke-width="0.9"/></svg>
<div class="t vn" style="left:736.5px;top:430.4px">Wendy Fehlner</div>
<div class="tile" style="top:438px;height:48px"></div>
<div class="t tn" style="left:767.7px;top:462.9px">Dominika&nbsp; Czern...</div>
<svg class="a" style="left:725.1px;top:476px" width="9" height="9" viewBox="0 0 9 9"><rect width="9" height="9" fill="rgba(30,30,30,0.55)"/><rect x="3.3" y="1.2" width="2.4" height="4.2" rx="1.2" fill="#e5483f"/><path d="M2.3 4.3 Q2.3 6.8 4.5 6.8 Q6.7 6.8 6.7 4.3 M4.5 6.8 V8.2" fill="none" stroke="#e5483f" stroke-width="0.7"/><path d="M1.5 8.2 L7.8 0.8" stroke="#e5483f" stroke-width="0.9"/></svg>
<!-- PANEL -->
<div class="a" style="left:853px;top:12px;width:171px;height:542px;background:#fff"></div>
<svg class="a" style="left:862px;top:21px" width="8" height="6" viewBox="0 0 8 6"><path d="M1.2 1.8 L4 4.4 L6.8 1.8" fill="none" stroke="#555" stroke-width="0.9"/></svg>
<div class="t" style="left:938.6px;top:23.5px;transform:translate(-50%,-50%);font-size:6.95px;font-weight:bold;color:#2b2b2b">Участники (33)</div>
<div class="a" style="left:863.4px;top:40.5px;width:151.8px;height:17.1px;border:0.8px solid #c9c9d3;border-radius:4px"></div>
<svg class="a" style="left:868px;top:44.5px" width="9" height="9" viewBox="0 0 9 9"><circle cx="3.9" cy="3.9" r="2.6" fill="none" stroke="#777" stroke-width="0.8"/><path d="M5.8 5.8 L7.8 7.8" stroke="#777" stroke-width="0.9"/></svg>
<div class="t" style="left:878.6px;top:49px;transform:translateY(-50%);font-size:6.56px;color:#8d8d93">Найти участника</div>
<div class="a" style="left:853px;top:58px;width:171px;height:467.5px;overflow:hidden">
<div class="a av" style="left:9.80px;top:4.20px;background:#8e4ec0">EJ</div>
<div class="t pn" style="left:30.80px;top:12.30px">Eudochia Jomir (Я)</div>
<svg class="a" style="left:136.00px;top:6.40px" width="10" height="10" viewBox="0 0 10 10"><rect x="3.6" y="1" width="2.8" height="5" rx="1.4" fill="none" stroke="#e8666a" stroke-width="0.8"/><path d="M2.4 4.6 Q2.4 7.6 5 7.6 Q7.6 7.6 7.6 4.6 M5 7.6 V9.2" fill="none" stroke="#e8666a" stroke-width="0.8"/><path d="M1.8 9.3 L8.4 0.7" stroke="#e8666a" stroke-width="0.9"/></svg>
<svg class="a" style="left:149.00px;top:6.40px" width="11" height="10" viewBox="0 0 11 10"><rect x="1.3" y="2.6" width="5.9" height="4.7" rx="1" fill="none" stroke="#8a8a8a" stroke-width="0.75"/><path d="M7.2 4.5 L9.6 3.1 V6.8 L7.2 5.4" fill="none" stroke="#8a8a8a" stroke-width="0.75"/></svg>
<div class="a av" style="left:9.80px;top:26.05px;background:radial-gradient(ellipse 45% 40% at 52% 58%,#f0d0c0 0 60%,transparent 64%),radial-gradient(ellipse 62% 70% at 50% 50%,#5a2a20 0 70%,transparent 74%),#e8e4e6"></div>
<div class="t pn" style="left:30.80px;top:34.15px">Olesea ...&nbsp;&nbsp;(Организатор)</div>
<div class="a" style="left:111.00px;top:29.95px;width:10px;height:6.6px;background:#0fa83c;border-radius:1px"></div>
<svg class="a" style="left:113.50px;top:30.25px" width="5" height="6" viewBox="0 0 5 6"><path d="M2.5 1.2 L4 3 H3 V4.8 H2 V3 H1z" fill="#fff"/></svg>
<svg class="a" style="left:124.50px;top:29.25px" width="8" height="8" viewBox="0 0 8 8"><circle cx="4" cy="4" r="3" fill="none" stroke="#c8c8c8" stroke-width="0.7"/><circle cx="4" cy="4" r="1.5" fill="#e5312f"/></svg>
<svg class="a" style="left:136.00px;top:28.25px" width="10" height="10" viewBox="0 0 10 10"><rect x="3.7" y="0.8" width="2.6" height="5.4" rx="1.3" fill="#777"/><path d="M2.6 4.8 Q2.6 7.5 5 7.5 Q7.4 7.5 7.4 4.8 M5 7.5 V9.3" fill="none" stroke="#777" stroke-width="0.7"/></svg>
<svg class="a" style="left:149.00px;top:28.25px" width="11" height="10" viewBox="0 0 11 10"><rect x="1.3" y="2.6" width="5.9" height="4.7" rx="1" fill="none" stroke="#8a8a8a" stroke-width="0.75"/><path d="M7.2 4.5 L9.6 3.1 V6.8 L7.2 5.4" fill="none" stroke="#8a8a8a" stroke-width="0.75"/></svg>
<div class="a av" style="left:9.80px;top:47.90px;background:#c9372c">AS</div>
<div class="t pn" style="left:30.80px;top:56.00px">ANASTASIA STRELNICOVA</div>
<svg class="a" style="left:150.00px;top:50.10px" width="10" height="10" viewBox="0 0 10 10"><rect x="3.6" y="1" width="2.8" height="5" rx="1.4" fill="none" stroke="#e8666a" stroke-width="0.8"/><path d="M2.4 4.6 Q2.4 7.6 5 7.6 Q7.6 7.6 7.6 4.6 M5 7.6 V9.2" fill="none" stroke="#e8666a" stroke-width="0.8"/><path d="M1.8 9.3 L8.4 0.7" stroke="#e8666a" stroke-width="0.9"/></svg>
<div class="a av" style="left:9.80px;top:69.75px;background:radial-gradient(ellipse 30% 36% at 50% 42%,#e6cfc0 0 60%,transparent 66%),radial-gradient(ellipse 50% 40% at 50% 100%,#dde6ee 0 60%,transparent 66%),linear-gradient(90deg,#cfd6de,#e8ecf0 50%,#c4ccd6)"></div>
<div class="t pn" style="left:30.80px;top:77.85px">Anastasiia Yakymenko</div>
<svg class="a" style="left:136.00px;top:71.95px" width="10" height="10" viewBox="0 0 10 10"><rect x="3.6" y="1" width="2.8" height="5" rx="1.4" fill="none" stroke="#e8666a" stroke-width="0.8"/><path d="M2.4 4.6 Q2.4 7.6 5 7.6 Q7.6 7.6 7.6 4.6 M5 7.6 V9.2" fill="none" stroke="#e8666a" stroke-width="0.8"/><path d="M1.8 9.3 L8.4 0.7" stroke="#e8666a" stroke-width="0.9"/></svg>
<svg class="a" style="left:149.00px;top:71.95px" width="11" height="10" viewBox="0 0 11 10"><rect x="1.3" y="2.6" width="5.9" height="4.7" rx="1" fill="none" stroke="#8a8a8a" stroke-width="0.75"/><path d="M7.2 4.5 L9.6 3.1 V6.8 L7.2 5.4" fill="none" stroke="#8a8a8a" stroke-width="0.75"/></svg>
<div class="a av" style="left:9.80px;top:91.60px;background:#34495e">AK</div>
<div class="t pn" style="left:30.80px;top:99.70px">Anatoliy Kovalyov</div>
<svg class="a" style="left:136.00px;top:93.80px" width="10" height="10" viewBox="0 0 10 10"><rect x="3.6" y="1" width="2.8" height="5" rx="1.4" fill="none" stroke="#e8666a" stroke-width="0.8"/><path d="M2.4 4.6 Q2.4 7.6 5 7.6 Q7.6 7.6 7.6 4.6 M5 7.6 V9.2" fill="none" stroke="#e8666a" stroke-width="0.8"/><path d="M1.8 9.3 L8.4 0.7" stroke="#e8666a" stroke-width="0.9"/></svg>
<svg class="a" style="left:149.00px;top:93.80px" width="11" height="10" viewBox="0 0 11 10"><rect x="1.3" y="2.6" width="5.9" height="4.7" rx="1" fill="none" stroke="#e8666a" stroke-width="0.75"/><path d="M7.2 4.5 L9.6 3.1 V6.8 L7.2 5.4" fill="none" stroke="#e8666a" stroke-width="0.75"/><path d="M1.4 8.6 L9.2 1.2" stroke="#e8666a" stroke-width="0.8"/></svg>
<div class="a av" style="left:9.80px;top:113.45px;background:#f0a30a">AL</div>
<div class="t pn" style="left:30.80px;top:121.55px">Andrii Lotariev</div>
<svg class="a" style="left:136.00px;top:115.65px" width="10" height="10" viewBox="0 0 10 10"><rect x="3.6" y="1" width="2.8" height="5" rx="1.4" fill="none" stroke="#e8666a" stroke-width="0.8"/><path d="M2.4 4.6 Q2.4 7.6 5 7.6 Q7.6 7.6 7.6 4.6 M5 7.6 V9.2" fill="none" stroke="#e8666a" stroke-width="0.8"/><path d="M1.8 9.3 L8.4 0.7" stroke="#e8666a" stroke-width="0.9"/></svg>
<svg class="a" style="left:149.00px;top:115.65px" width="11" height="10" viewBox="0 0 11 10"><rect x="1.3" y="2.6" width="5.9" height="4.7" rx="1" fill="none" stroke="#e8666a" stroke-width="0.75"/><path d="M7.2 4.5 L9.6 3.1 V6.8 L7.2 5.4" fill="none" stroke="#e8666a" stroke-width="0.75"/><path d="M1.4 8.6 L9.2 1.2" stroke="#e8666a" stroke-width="0.8"/></svg>
<div class="a av" style="left:9.80px;top:135.30px;background:#c9372c">AM</div>
<div class="t pn" style="left:30.80px;top:143.40px">ANNA MADAN</div>
<svg class="a" style="left:136.00px;top:137.50px" width="10" height="10" viewBox="0 0 10 10"><rect x="3.6" y="1" width="2.8" height="5" rx="1.4" fill="none" stroke="#e8666a" stroke-width="0.8"/><path d="M2.4 4.6 Q2.4 7.6 5 7.6 Q7.6 7.6 7.6 4.6 M5 7.6 V9.2" fill="none" stroke="#e8666a" stroke-width="0.8"/><path d="M1.8 9.3 L8.4 0.7" stroke="#e8666a" stroke-width="0.9"/></svg>
<svg class="a" style="left:149.00px;top:137.50px" width="11" height="10" viewBox="0 0 11 10"><rect x="1.3" y="2.6" width="5.9" height="4.7" rx="1" fill="none" stroke="#e8666a" stroke-width="0.75"/><path d="M7.2 4.5 L9.6 3.1 V6.8 L7.2 5.4" fill="none" stroke="#e8666a" stroke-width="0.75"/><path d="M1.4 8.6 L9.2 1.2" stroke="#e8666a" stroke-width="0.8"/></svg>
<div class="a av" style="left:9.80px;top:157.15px;background:#f0a30a">CT</div>
<div class="t pn" style="left:30.80px;top:165.25px">Carolina Timco</div>
<svg class="a" style="left:136.00px;top:159.35px" width="10" height="10" viewBox="0 0 10 10"><rect x="3.6" y="1" width="2.8" height="5" rx="1.4" fill="none" stroke="#e8666a" stroke-width="0.8"/><path d="M2.4 4.6 Q2.4 7.6 5 7.6 Q7.6 7.6 7.6 4.6 M5 7.6 V9.2" fill="none" stroke="#e8666a" stroke-width="0.8"/><path d="M1.8 9.3 L8.4 0.7" stroke="#e8666a" stroke-width="0.9"/></svg>
<svg class="a" style="left:149.00px;top:159.35px" width="11" height="10" viewBox="0 0 11 10"><rect x="1.3" y="2.6" width="5.9" height="4.7" rx="1" fill="none" stroke="#e8666a" stroke-width="0.75"/><path d="M7.2 4.5 L9.6 3.1 V6.8 L7.2 5.4" fill="none" stroke="#e8666a" stroke-width="0.75"/><path d="M1.4 8.6 L9.2 1.2" stroke="#e8666a" stroke-width="0.8"/></svg>
<div class="a av" style="left:9.80px;top:179.00px;background:#c9372c">CA</div>
<div class="t pn" style="left:30.80px;top:187.10px">Christina Armutlieva</div>
<svg class="a" style="left:136.00px;top:181.20px" width="10" height="10" viewBox="0 0 10 10"><rect x="3.6" y="1" width="2.8" height="5" rx="1.4" fill="none" stroke="#e8666a" stroke-width="0.8"/><path d="M2.4 4.6 Q2.4 7.6 5 7.6 Q7.6 7.6 7.6 4.6 M5 7.6 V9.2" fill="none" stroke="#e8666a" stroke-width="0.8"/><path d="M1.8 9.3 L8.4 0.7" stroke="#e8666a" stroke-width="0.9"/></svg>
<svg class="a" style="left:149.00px;top:181.20px" width="11" height="10" viewBox="0 0 11 10"><rect x="1.3" y="2.6" width="5.9" height="4.7" rx="1" fill="none" stroke="#8a8a8a" stroke-width="0.75"/><path d="M7.2 4.5 L9.6 3.1 V6.8 L7.2 5.4" fill="none" stroke="#8a8a8a" stroke-width="0.75"/></svg>
<div class="a av" style="left:9.80px;top:200.85px;background:#34495e">CD</div>
<div class="t pn" style="left:30.80px;top:208.95px">Ciorbă Dumitru</div>
<svg class="a" style="left:136.00px;top:203.05px" width="10" height="10" viewBox="0 0 10 10"><rect x="3.6" y="1" width="2.8" height="5" rx="1.4" fill="none" stroke="#e8666a" stroke-width="0.8"/><path d="M2.4 4.6 Q2.4 7.6 5 7.6 Q7.6 7.6 7.6 4.6 M5 7.6 V9.2" fill="none" stroke="#e8666a" stroke-width="0.8"/><path d="M1.8 9.3 L8.4 0.7" stroke="#e8666a" stroke-width="0.9"/></svg>
<svg class="a" style="left:149.00px;top:203.05px" width="11" height="10" viewBox="0 0 11 10"><rect x="1.3" y="2.6" width="5.9" height="4.7" rx="1" fill="none" stroke="#8a8a8a" stroke-width="0.75"/><path d="M7.2 4.5 L9.6 3.1 V6.8 L7.2 5.4" fill="none" stroke="#8a8a8a" stroke-width="0.75"/></svg>
<div class="a av" style="left:9.80px;top:222.70px;background:radial-gradient(ellipse 38% 40% at 50% 56%,#f2d2c2 0 62%,transparent 66%),radial-gradient(ellipse 60% 72% at 50% 52%,#9a4a2e 0 70%,transparent 74%),#ececec"></div>
<div class="t pn" style="left:30.80px;top:230.80px">Ciumacenco Valentina</div>
<svg class="a" style="left:136.00px;top:224.90px" width="10" height="10" viewBox="0 0 10 10"><rect x="3.6" y="1" width="2.8" height="5" rx="1.4" fill="none" stroke="#e8666a" stroke-width="0.8"/><path d="M2.4 4.6 Q2.4 7.6 5 7.6 Q7.6 7.6 7.6 4.6 M5 7.6 V9.2" fill="none" stroke="#e8666a" stroke-width="0.8"/><path d="M1.8 9.3 L8.4 0.7" stroke="#e8666a" stroke-width="0.9"/></svg>
<svg class="a" style="left:149.00px;top:224.90px" width="11" height="10" viewBox="0 0 11 10"><rect x="1.3" y="2.6" width="5.9" height="4.7" rx="1" fill="none" stroke="#8a8a8a" stroke-width="0.75"/><path d="M7.2 4.5 L9.6 3.1 V6.8 L7.2 5.4" fill="none" stroke="#8a8a8a" stroke-width="0.75"/></svg>
<div class="a av" style="left:9.80px;top:244.55px;background:#8e4ec0">DS</div>
<div class="t pn" style="left:30.80px;top:252.65px">Desislava Sariyska</div>
<svg class="a" style="left:136.00px;top:246.75px" width="10" height="10" viewBox="0 0 10 10"><rect x="3.6" y="1" width="2.8" height="5" rx="1.4" fill="none" stroke="#e8666a" stroke-width="0.8"/><path d="M2.4 4.6 Q2.4 7.6 5 7.6 Q7.6 7.6 7.6 4.6 M5 7.6 V9.2" fill="none" stroke="#e8666a" stroke-width="0.8"/><path d="M1.8 9.3 L8.4 0.7" stroke="#e8666a" stroke-width="0.9"/></svg>
<svg class="a" style="left:149.00px;top:246.75px" width="11" height="10" viewBox="0 0 11 10"><rect x="1.3" y="2.6" width="5.9" height="4.7" rx="1" fill="none" stroke="#e8666a" stroke-width="0.75"/><path d="M7.2 4.5 L9.6 3.1 V6.8 L7.2 5.4" fill="none" stroke="#e8666a" stroke-width="0.75"/><path d="M1.4 8.6 L9.2 1.2" stroke="#e8666a" stroke-width="0.8"/></svg>
<div class="a av" style="left:9.80px;top:266.40px;background:#8e4ec0">DC</div>
<div class="t pn" style="left:30.80px;top:274.50px">Dominika Czerniak</div>
<svg class="a" style="left:136.00px;top:268.60px" width="10" height="10" viewBox="0 0 10 10"><rect x="3.6" y="1" width="2.8" height="5" rx="1.4" fill="none" stroke="#e8666a" stroke-width="0.8"/><path d="M2.4 4.6 Q2.4 7.6 5 7.6 Q7.6 7.6 7.6 4.6 M5 7.6 V9.2" fill="none" stroke="#e8666a" stroke-width="0.8"/><path d="M1.8 9.3 L8.4 0.7" stroke="#e8666a" stroke-width="0.9"/></svg>
<svg class="a" style="left:149.00px;top:268.60px" width="11" height="10" viewBox="0 0 11 10"><rect x="1.3" y="2.6" width="5.9" height="4.7" rx="1" fill="none" stroke="#e8666a" stroke-width="0.75"/><path d="M7.2 4.5 L9.6 3.1 V6.8 L7.2 5.4" fill="none" stroke="#e8666a" stroke-width="0.75"/><path d="M1.4 8.6 L9.2 1.2" stroke="#e8666a" stroke-width="0.8"/></svg>
<div class="a av" style="left:9.80px;top:288.25px;background:#1aa28a">EU</div>
<div class="t pn" style="left:30.80px;top:296.35px">Erasmus+ UA</div>
<svg class="a" style="left:136.00px;top:290.45px" width="10" height="10" viewBox="0 0 10 10"><rect x="3.6" y="1" width="2.8" height="5" rx="1.4" fill="none" stroke="#e8666a" stroke-width="0.8"/><path d="M2.4 4.6 Q2.4 7.6 5 7.6 Q7.6 7.6 7.6 4.6 M5 7.6 V9.2" fill="none" stroke="#e8666a" stroke-width="0.8"/><path d="M1.8 9.3 L8.4 0.7" stroke="#e8666a" stroke-width="0.9"/></svg>
<svg class="a" style="left:149.00px;top:290.45px" width="11" height="10" viewBox="0 0 11 10"><rect x="1.3" y="2.6" width="5.9" height="4.7" rx="1" fill="none" stroke="#e8666a" stroke-width="0.75"/><path d="M7.2 4.5 L9.6 3.1 V6.8 L7.2 5.4" fill="none" stroke="#e8666a" stroke-width="0.75"/><path d="M1.4 8.6 L9.2 1.2" stroke="#e8666a" stroke-width="0.8"/></svg>
<div class="a av" style="left:9.80px;top:310.10px;background:#c9372c">FB</div>
<div class="t pn" style="left:30.80px;top:318.20px">Ferran Badia</div>
<svg class="a" style="left:136.00px;top:312.30px" width="10" height="10" viewBox="0 0 10 10"><rect x="3.6" y="1" width="2.8" height="5" rx="1.4" fill="none" stroke="#e8666a" stroke-width="0.8"/><path d="M2.4 4.6 Q2.4 7.6 5 7.6 Q7.6 7.6 7.6 4.6 M5 7.6 V9.2" fill="none" stroke="#e8666a" stroke-width="0.8"/><path d="M1.8 9.3 L8.4 0.7" stroke="#e8666a" stroke-width="0.9"/></svg>
<svg class="a" style="left:149.00px;top:312.30px" width="11" height="10" viewBox="0 0 11 10"><rect x="1.3" y="2.6" width="5.9" height="4.7" rx="1" fill="none" stroke="#8a8a8a" stroke-width="0.75"/><path d="M7.2 4.5 L9.6 3.1 V6.8 L7.2 5.4" fill="none" stroke="#8a8a8a" stroke-width="0.75"/></svg>
<div class="a av" style="left:9.80px;top:331.95px;background:#8e4ec0">LB</div>
<div class="t pn" style="left:30.80px;top:340.05px">Larisa Bugaian</div>
<svg class="a" style="left:136.00px;top:334.15px" width="10" height="10" viewBox="0 0 10 10"><rect x="3.6" y="1" width="2.8" height="5" rx="1.4" fill="none" stroke="#e8666a" stroke-width="0.8"/><path d="M2.4 4.6 Q2.4 7.6 5 7.6 Q7.6 7.6 7.6 4.6 M5 7.6 V9.2" fill="none" stroke="#e8666a" stroke-width="0.8"/><path d="M1.8 9.3 L8.4 0.7" stroke="#e8666a" stroke-width="0.9"/></svg>
<svg class="a" style="left:149.00px;top:334.15px" width="11" height="10" viewBox="0 0 11 10"><rect x="1.3" y="2.6" width="5.9" height="4.7" rx="1" fill="none" stroke="#e8666a" stroke-width="0.75"/><path d="M7.2 4.5 L9.6 3.1 V6.8 L7.2 5.4" fill="none" stroke="#e8666a" stroke-width="0.75"/><path d="M1.4 8.6 L9.2 1.2" stroke="#e8666a" stroke-width="0.8"/></svg>
<div class="a av" style="left:9.80px;top:353.80px;background:#c9372c">LC</div>
<div class="t pn" style="left:30.80px;top:361.90px">Lilia Covas</div>
<svg class="a" style="left:136.00px;top:356.00px" width="10" height="10" viewBox="0 0 10 10"><rect x="3.6" y="1" width="2.8" height="5" rx="1.4" fill="none" stroke="#e8666a" stroke-width="0.8"/><path d="M2.4 4.6 Q2.4 7.6 5 7.6 Q7.6 7.6 7.6 4.6 M5 7.6 V9.2" fill="none" stroke="#e8666a" stroke-width="0.8"/><path d="M1.8 9.3 L8.4 0.7" stroke="#e8666a" stroke-width="0.9"/></svg>
<svg class="a" style="left:149.00px;top:356.00px" width="11" height="10" viewBox="0 0 11 10"><rect x="1.3" y="2.6" width="5.9" height="4.7" rx="1" fill="none" stroke="#e8666a" stroke-width="0.75"/><path d="M7.2 4.5 L9.6 3.1 V6.8 L7.2 5.4" fill="none" stroke="#e8666a" stroke-width="0.75"/><path d="M1.4 8.6 L9.2 1.2" stroke="#e8666a" stroke-width="0.8"/></svg>
<div class="a av" style="left:9.80px;top:375.65px;background:#3a8fd6">LS</div>
<div class="t pn" style="left:30.80px;top:383.75px">Liudmila Stihi</div>
<svg class="a" style="left:136.00px;top:377.85px" width="10" height="10" viewBox="0 0 10 10"><rect x="3.6" y="1" width="2.8" height="5" rx="1.4" fill="none" stroke="#e8666a" stroke-width="0.8"/><path d="M2.4 4.6 Q2.4 7.6 5 7.6 Q7.6 7.6 7.6 4.6 M5 7.6 V9.2" fill="none" stroke="#e8666a" stroke-width="0.8"/><path d="M1.8 9.3 L8.4 0.7" stroke="#e8666a" stroke-width="0.9"/></svg>
<svg class="a" style="left:149.00px;top:377.85px" width="11" height="10" viewBox="0 0 11 10"><rect x="1.3" y="2.6" width="5.9" height="4.7" rx="1" fill="none" stroke="#e8666a" stroke-width="0.75"/><path d="M7.2 4.5 L9.6 3.1 V6.8 L7.2 5.4" fill="none" stroke="#e8666a" stroke-width="0.75"/><path d="M1.4 8.6 L9.2 1.2" stroke="#e8666a" stroke-width="0.8"/></svg>
<div class="a av" style="left:9.80px;top:397.50px;background:#c9372c">Л</div>
<div class="t pn" style="left:30.80px;top:405.60px">Liudmyla Rishko</div>
<svg class="a" style="left:136.00px;top:399.70px" width="10" height="10" viewBox="0 0 10 10"><rect x="3.6" y="1" width="2.8" height="5" rx="1.4" fill="none" stroke="#e8666a" stroke-width="0.8"/><path d="M2.4 4.6 Q2.4 7.6 5 7.6 Q7.6 7.6 7.6 4.6 M5 7.6 V9.2" fill="none" stroke="#e8666a" stroke-width="0.8"/><path d="M1.8 9.3 L8.4 0.7" stroke="#e8666a" stroke-width="0.9"/></svg>
<svg class="a" style="left:149.00px;top:399.70px" width="11" height="10" viewBox="0 0 11 10"><rect x="1.3" y="2.6" width="5.9" height="4.7" rx="1" fill="none" stroke="#e8666a" stroke-width="0.75"/><path d="M7.2 4.5 L9.6 3.1 V6.8 L7.2 5.4" fill="none" stroke="#e8666a" stroke-width="0.75"/><path d="M1.4 8.6 L9.2 1.2" stroke="#e8666a" stroke-width="0.8"/></svg>
<div class="a av" style="left:9.80px;top:419.35px;background:#2eae5e">LC</div>
<div class="t pn" style="left:30.80px;top:427.45px">Ludmila Coada</div>
<svg class="a" style="left:136.00px;top:421.55px" width="10" height="10" viewBox="0 0 10 10"><rect x="3.6" y="1" width="2.8" height="5" rx="1.4" fill="none" stroke="#e8666a" stroke-width="0.8"/><path d="M2.4 4.6 Q2.4 7.6 5 7.6 Q7.6 7.6 7.6 4.6 M5 7.6 V9.2" fill="none" stroke="#e8666a" stroke-width="0.8"/><path d="M1.8 9.3 L8.4 0.7" stroke="#e8666a" stroke-width="0.9"/></svg>
<svg class="a" style="left:149.00px;top:421.55px" width="11" height="10" viewBox="0 0 11 10"><rect x="1.3" y="2.6" width="5.9" height="4.7" rx="1" fill="none" stroke="#e8666a" stroke-width="0.75"/><path d="M7.2 4.5 L9.6 3.1 V6.8 L7.2 5.4" fill="none" stroke="#e8666a" stroke-width="0.75"/><path d="M1.4 8.6 L9.2 1.2" stroke="#e8666a" stroke-width="0.8"/></svg>
<div class="a av" style="left:9.80px;top:441.20px;background:#34495e">NV</div>
<div class="t pn" style="left:30.80px;top:449.30px">Nadejda Velisco</div>
<svg class="a" style="left:136.00px;top:443.40px" width="10" height="10" viewBox="0 0 10 10"><rect x="3.6" y="1" width="2.8" height="5" rx="1.4" fill="none" stroke="#e8666a" stroke-width="0.8"/><path d="M2.4 4.6 Q2.4 7.6 5 7.6 Q7.6 7.6 7.6 4.6 M5 7.6 V9.2" fill="none" stroke="#e8666a" stroke-width="0.8"/><path d="M1.8 9.3 L8.4 0.7" stroke="#e8666a" stroke-width="0.9"/></svg>
<svg class="a" style="left:149.00px;top:443.40px" width="11" height="10" viewBox="0 0 11 10"><rect x="1.3" y="2.6" width="5.9" height="4.7" rx="1" fill="none" stroke="#e8666a" stroke-width="0.75"/><path d="M7.2 4.5 L9.6 3.1 V6.8 L7.2 5.4" fill="none" stroke="#e8666a" stroke-width="0.75"/><path d="M1.4 8.6 L9.2 1.2" stroke="#e8666a" stroke-width="0.8"/></svg>
<div class="a av" style="left:9.80px;top:463.05px;background:radial-gradient(ellipse 36% 40% at 50% 58%,#e2b8a4 0 62%,transparent 66%),radial-gradient(ellipse 50% 58% at 50% 50%,#6a4436 0 70%,transparent 74%),#efefef"></div>
<div class="t pn" style="left:30.80px;top:471.15px"></div>
<svg class="a" style="left:136.00px;top:465.25px" width="10" height="10" viewBox="0 0 10 10"><rect x="3.6" y="1" width="2.8" height="5" rx="1.4" fill="none" stroke="#e8666a" stroke-width="0.8"/><path d="M2.4 4.6 Q2.4 7.6 5 7.6 Q7.6 7.6 7.6 4.6 M5 7.6 V9.2" fill="none" stroke="#e8666a" stroke-width="0.8"/><path d="M1.8 9.3 L8.4 0.7" stroke="#e8666a" stroke-width="0.9"/></svg>
<svg class="a" style="left:149.00px;top:465.25px" width="11" height="10" viewBox="0 0 11 10"><rect x="1.3" y="2.6" width="5.9" height="4.7" rx="1" fill="none" stroke="#e8666a" stroke-width="0.75"/><path d="M7.2 4.5 L9.6 3.1 V6.8 L7.2 5.4" fill="none" stroke="#e8666a" stroke-width="0.75"/><path d="M1.4 8.6 L9.2 1.2" stroke="#e8666a" stroke-width="0.8"/></svg>
</div>
<div class="a" style="left:1018.8px;top:58px;width:4px;height:467px;background:#f0f0f4;border-radius:2px"></div>
<div class="a" style="left:1018.8px;top:59px;width:4px;height:317.5px;background:#a9a9b4;border-radius:2px"></div>
<div class="a" style="left:857.4px;top:535.3px;width:42.3px;height:11.6px;background:#f0f0f5;border-radius:3px"></div>
<div class="t pb" style="left:878.5px">Пригласить</div>
<div class="a" style="left:903.3px;top:535.3px;width:65.9px;height:11.6px;background:#f0f0f5;border-radius:3px"></div>
<div class="t pb" style="left:936.2px">Включить свой звук</div>
<div class="a" style="left:972.9px;top:535.3px;width:46.7px;height:11.6px;background:#f0f0f5;border-radius:3px"></div>
<div class="t pb" style="left:996.2px">Поднять руку</div>
<!-- TASKBAR -->
<svg class="a" style="left:0;top:554.5px" width="1024" height="22" viewBox="0 0 1024 22">
 <defs><filter id="kb"><feGaussianBlur stdDeviation="2.2"/></filter><filter id="kb2"><feGaussianBlur stdDeviation="0.45"/></filter>
 <linearGradient id="tbg" x1="0" x2="1"><stop offset="0" stop-color="#3b8ccd"/><stop offset="0.35" stop-color="#3a8bcc"/><stop offset="0.66" stop-color="#2f7bc0"/><stop offset="0.78" stop-color="#2766aa"/><stop offset="0.88" stop-color="#215a98"/><stop offset="0.99" stop-color="#1f5694"/><stop offset="1" stop-color="#3a7ab8"/></linearGradient>
 <linearGradient id="tbv" x1="0" y1="0" x2="0" y2="1"><stop offset="0" stop-color="#ffffff" stop-opacity="0.25"/><stop offset="0.4" stop-color="#ffffff" stop-opacity="0.08"/><stop offset="1" stop-color="#000" stop-opacity="0.05"/></linearGradient>
 <linearGradient id="btn" x1="0" y1="0" x2="0" y2="1"><stop offset="0" stop-color="#a9d3f0"/><stop offset="1" stop-color="#6eaedd"/></linearGradient>
 <linearGradient id="btn2" x1="0" y1="0" x2="0" y2="1"><stop offset="0" stop-color="#c9e4f6"/><stop offset="1" stop-color="#93c6ea"/></linearGradient>
 <radialGradient id="orb" cx="0.5" cy="0.35" r="0.6"><stop offset="0" stop-color="#9cc6ea"/><stop offset="0.55" stop-color="#3c82c4"/><stop offset="1" stop-color="#174a86"/></radialGradient>
 </defs>
 <rect width="1024" height="22" fill="url(#tbg)"/>
 <rect width="1024" height="22" fill="url(#tbv)"/>
 <path d="M688 0 Q722 8 748 22 L730 22 Q708 8 676 0z" fill="#d8ecf8" opacity="0.8" filter="url(#kb)"/>
 <rect x="0" y="0" width="1024" height="0.8" fill="#9fcbea"/>
 <g stroke="#5d9acb" stroke-width="0.7">
  <rect x="131" y="0.6" width="28.6" height="21" rx="1.5" fill="url(#btn)" opacity="0.85"/>
  <rect x="164" y="0.6" width="31.2" height="21" rx="1.5" fill="url(#btn2)"/>
  <rect x="230" y="0.6" width="31.5" height="21" rx="1.5" fill="url(#btn)" opacity="0.85"/>
  <rect x="263" y="0.6" width="29.3" height="21" rx="1.5" fill="url(#btn)" opacity="0.85"/>
  <rect x="296.3" y="0.6" width="31.7" height="21" rx="1.5" fill="url(#btn)" opacity="0.85"/>
  <rect x="329.5" y="0.6" width="30.8" height="21" rx="1.5" fill="url(#btn)" opacity="0.85"/>
 </g>
 <g filter="url(#kb2)">
 <!-- start orb -->
 <circle cx="14.5" cy="11.2" r="9.8" fill="#1c4f88"/>
 <circle cx="14.5" cy="11.2" r="9" fill="url(#orb)"/>
 <ellipse cx="14.5" cy="7" rx="7" ry="4.2" fill="#dbe9f6" opacity="0.45"/>
 <path d="M9.5 6.8 Q11.3 5.8 13.8 6.7 L13.3 10.6 Q11.1 9.8 9 10.9z" fill="#f0522c"/>
 <path d="M14.6 6.9 Q17 7.8 19.4 6.9 L18.9 10.9 Q16.6 11.8 14.1 10.9z" fill="#86c440"/>
 <path d="M8.9 11.7 Q11 10.6 13.2 11.5 L12.7 15.5 Q10.6 14.7 8.4 15.7z" fill="#2aa4ea"/>
 <path d="M14 11.8 Q16.4 12.7 18.8 11.8 L18.3 15.8 Q16 16.7 13.5 15.8z" fill="#f8c21c"/>
 <!-- IE -->
 <path d="M52.5 11.5 H43.5 Q43.8 7.5 47.3 7.5 Q50.8 7.5 51.2 10" fill="none" stroke="#5cc8f6" stroke-width="2.4"/>
 <path d="M43.5 11.5 Q43.5 16.5 47.5 16.5 Q50.5 16.5 51.8 14" fill="none" stroke="#5cc8f6" stroke-width="2.4"/>
 <path d="M41 17.5 Q41 9 48 5 Q53 2.5 54.5 3.5" fill="none" stroke="#f2c230" stroke-width="1.2"/>
 <!-- explorer -->
 <rect x="72.5" y="5.5" width="16.5" height="13.5" rx="1" fill="#f2e2a4"/><rect x="73" y="4" width="16" height="3" fill="#e9cf7a"/><circle cx="75" cy="5.5" r="0.8" fill="#6ac04a"/><circle cx="79" cy="5.5" r="0.8" fill="#e84a3a"/><rect x="74.5" y="13" width="12.5" height="4.5" fill="#8cc0e6"/><rect x="78" y="18" width="5" height="1.2" fill="#e8a040"/>
 <!-- media player -->
 <rect x="106.5" y="5.5" width="13" height="11.5" fill="#8cc0e6" opacity="0.9"/><circle cx="112" cy="11" r="4.6" fill="#ee7a1a"/><circle cx="112" cy="11" r="3.3" fill="#f59a3a"/><path d="M110.6 8.4 l4.2 2.6 l-4.2 2.6z" fill="#fff"/>
 <!-- opera -->
 <ellipse cx="145" cy="11.2" rx="7.6" ry="8.3" fill="#e0262c"/><ellipse cx="145" cy="11.2" rx="3.6" ry="6.4" fill="#7db6e0"/>
 <!-- chrome -->
 <circle cx="180.2" cy="11.5" r="8.2" fill="#e4453a"/>
 <path d="M180.2 11.5 L173.1 15.6 A8.2 8.2 0 0 0 184.3 18.6z" fill="#2da94f"/>
 <path d="M180.2 11.5 L184.3 18.6 A8.2 8.2 0 0 0 188.4 11.5 L180.2 11.5z" fill="#f6c21a"/>
 <path d="M173.1 15.6 A8.2 8.2 0 0 1 180.2 3.3 L180.2 7.5z" fill="#e4453a"/>
 <circle cx="180.2" cy="11.5" r="4" fill="#fff"/><circle cx="180.2" cy="11.5" r="3" fill="#3f82ea"/>
 <!-- chromium -->
 <circle cx="213" cy="11.5" r="8" fill="#4f88e8"/><path d="M213 11.5 L206 15.5 A8 8 0 0 0 217 18.5z" fill="#a9c8f6"/><circle cx="213" cy="11.5" r="3.9" fill="#cfe0fa"/><circle cx="213" cy="11.5" r="2.9" fill="#3f7ee8"/>
 <!-- photos -->
 <rect x="238" y="4.5" width="16" height="13" fill="#2a5a96"/><rect x="239.5" y="6" width="13" height="10" fill="#b8d8ee"/><path d="M239.5 12 Q245 9.5 252.5 13.5 V16 H239.5z" fill="#2e4a5a"/><path d="M244 14.5 h8" stroke="#6ab06a" stroke-width="0.6"/>
 <!-- zoom -->
 <rect x="269" y="3" width="16.5" height="16.5" rx="5.5" fill="#4a8cf2"/><rect x="272.5" y="8.2" width="6.8" height="6" rx="1" fill="#fff"/><path d="M279.8 10.2 L283 8.3 V14.2 L279.8 12.3z" fill="#fff"/>
 <!-- word -->
 <rect x="309" y="5" width="10.5" height="13" fill="#fff"/><g stroke="#2b579a" stroke-width="0.7"><path d="M311 7.3 h7 M311 9.6 h7 M311 11.9 h7 M311 14.2 h7 M311 16.5 h7"/></g>
 <path d="M303.5 3.5 L313.5 2 V21 L303.5 19.5z" fill="#2b579a"/><text x="304.2" y="14.8" font-size="7.2" font-weight="bold" font-family="Liberation Sans" fill="#fff">W</text>
 <!-- notepad -->
 <path d="M339 5.5 L350.5 3.5 L354 16.5 L342 19z" fill="#e6eef4" stroke="#9aa8b4" stroke-width="0.5"/><path d="M339 5.5 L350.5 3.5" stroke="#8a96a2" stroke-width="1.2"/><path d="M350.5 6 L354 16.5 L351 17" fill="#c8b89a"/><path d="M335.5 14 Q338 12 340 14" stroke="#5a98c8" stroke-width="1.2" fill="none"/>
 </g>
 <!-- tray -->
 <text x="909.5" y="12.2" font-size="6.2" font-family="Liberation Sans" fill="#dfe8f2">EN</text>
 <path d="M927 12 l2 -2 l2 2z" fill="#f0f0f0"/>
 <path d="M937.5 4.8 v10 M937.5 5 h5 v4.5 h-5" fill="#f4f4f4" stroke="#f4f4f4" stroke-width="0.8"/><circle cx="943" cy="12.2" r="2.4" fill="#e02b2b"/><path d="M941.8 11 l2.4 2.4 M944.2 11 l-2.4 2.4" stroke="#fff" stroke-width="0.6"/>
 <rect x="951.5" y="6" width="7.5" height="6" fill="none" stroke="#f0f0f0" stroke-width="0.9"/><path d="M950 13.5 h4" stroke="#f0f0f0" stroke-width="0.9"/><path d="M955 4 l2 2 l-2 2" fill="none" stroke="#f0f0f0" stroke-width="0.7"/>
 <path d="M963.5 8 h1.8 l2.2 -2.5 v9 l-2.2 -2.5 h-1.8z" fill="#f2f2f2"/><path d="M969 7.5 q1.2 2 0 4" fill="none" stroke="#e0e0e0" stroke-width="0.6"/>
 <text x="988.2" y="9.6" font-size="6.6" font-family="Liberation Sans" fill="#f2f6fa">11:33</text>
 <text x="980.8" y="18.7" font-size="6.6" font-family="Liberation Sans" fill="#f2f6fa" textLength="28.8">22.02.2021</text>
 <rect x="1017" y="0" width="7" height="22" fill="#7fa8cc" opacity="0.55"/>
</svg>
</body></html>
